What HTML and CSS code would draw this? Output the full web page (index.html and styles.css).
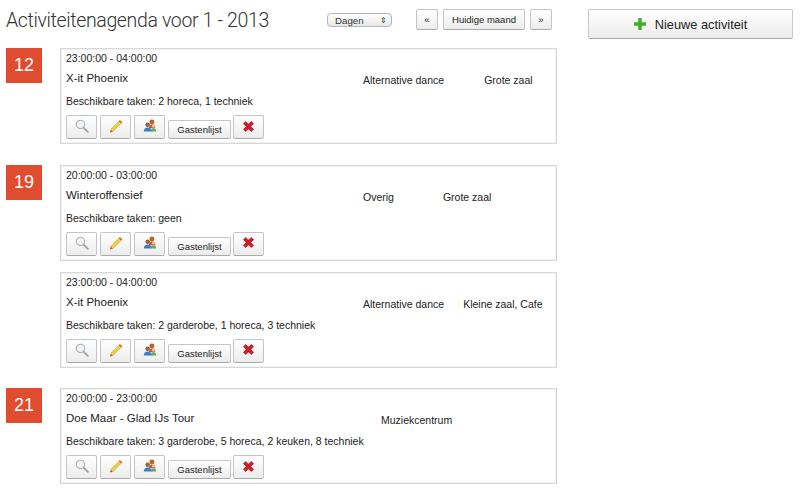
FILE: index.html
```html
<!DOCTYPE html>
<html lang="nl">
<head>
<meta charset="utf-8">
<title>Activiteitenagenda</title>
<link rel="stylesheet" href="styles.css">
</head>
<body>
<svg class="defs" width="0" height="0" aria-hidden="true">
  <symbol id="i-search" viewBox="0 0 18 18">
    <circle cx="7" cy="7" r="5.400" fill="#eef3f8" stroke="#aab4bc" stroke-width="1.400"/>
    <path d="M11 11l5.500 5.500" stroke="#a3a3a3" stroke-width="2.400" stroke-linecap="round"/>
  </symbol>
  <symbol id="i-pencil" viewBox="0 0 18 18">
    <path d="M1.500 17l1-4L14 1.500l3 2.800L5.500 16z" fill="#f0cc45" stroke="#c29a2c" stroke-width=".5"/>
    <path d="M14 1.500l3 2.800-1.400 1.400-2.900-2.800z" fill="#cf6f58"/>
    <path d="M1.500 17l1-3 2.200 2z" fill="#6d6148"/>
  </symbol>
  <symbol id="i-users" viewBox="0 0 18 18">
    <circle cx="11.500" cy="4" r="3.200" fill="#b9642c"/>
    <path d="M7.500 12c0-3.500 1.800-5 4-5s4.500 1.500 4.500 5z" fill="#d2503c"/>
    <circle cx="13.500" cy="9" r="2.200" fill="#e6bd94"/>
    <path d="M10 16c0-2.800 1.500-4.200 3.500-4.200S17 13.200 17 16z" fill="#5fae55"/>
    <circle cx="6" cy="7.500" r="2.900" fill="#9a6236"/>
    <path d="M1 16c0-3.500 2.200-5.200 5-5.200s5 1.700 5 5.200z" fill="#3e7cc8"/>
  </symbol>
  <symbol id="i-x" viewBox="0 0 16 16">
    <path d="M1.500 4.500l3-3L8 5l3.500-3.500 3 3L11 8l3.500 3.500-3 3L8 11l-3.500 3.500-3-3L5 8z" fill="#c8202a" stroke="#a8181f" stroke-width=".4"/>
  </symbol>
</svg>
<div class="page">
  <main class="main">
    <header class="head">
      <h1 class="title">Activiteitenagenda voor 1 - 2013</h1>
      <div class="select"><span>Dagen</span><span class="arrows">&#8661;</span></div>
      <nav class="pager">
        <button class="btn pg small">&laquo;</button>
        <button class="btn pg wide">Huidige maand</button>
        <button class="btn pg small">&raquo;</button>
      </nav>
    </header>

    <section class="day">
      <div class="num">12</div>
      <div class="cards">
        <article class="card">
          <div class="time">23:00:00 - 04:00:00</div>
          <div class="row"><span class="name">X-it Phoenix</span><span class="genre">Alternative dance</span><span class="loc l40">Grote zaal</span></div>
          <div class="tasks">Beschikbare taken: 2 horeca, 1 techniek</div>
          <div class="tools">
            <button class="btn ic"><svg class="icon"><use href="#i-search"/></svg></button>
            <button class="btn ic"><svg class="icon"><use href="#i-pencil"/></svg></button>
            <button class="btn ic"><svg class="icon"><use href="#i-users"/></svg></button>
            <button class="btn guest">Gastenlijst</button>
            <button class="btn ic"><svg class="icon-x"><use href="#i-x"/></svg></button>
          </div>
        </article>
      </div>
    </section>

    <section class="day">
      <div class="num">19</div>
      <div class="cards">
        <article class="card">
          <div class="time">20:00:00 - 03:00:00</div>
          <div class="row"><span class="name">Winteroffensief</span><span class="genre">Overig</span><span class="loc l49">Grote zaal</span></div>
          <div class="tasks">Beschikbare taken: geen</div>
          <div class="tools">
            <button class="btn ic"><svg class="icon"><use href="#i-search"/></svg></button>
            <button class="btn ic"><svg class="icon"><use href="#i-pencil"/></svg></button>
            <button class="btn ic"><svg class="icon"><use href="#i-users"/></svg></button>
            <button class="btn guest">Gastenlijst</button>
            <button class="btn ic"><svg class="icon-x"><use href="#i-x"/></svg></button>
          </div>
        </article>
        <article class="card">
          <div class="time">23:00:00 - 04:00:00</div>
          <div class="row"><span class="name">X-it Phoenix</span><span class="genre">Alternative dance</span><span class="loc l19">Kleine zaal, Cafe</span></div>
          <div class="tasks">Beschikbare taken: 2 garderobe, 1 horeca, 3 techniek</div>
          <div class="tools">
            <button class="btn ic"><svg class="icon"><use href="#i-search"/></svg></button>
            <button class="btn ic"><svg class="icon"><use href="#i-pencil"/></svg></button>
            <button class="btn ic"><svg class="icon"><use href="#i-users"/></svg></button>
            <button class="btn guest">Gastenlijst</button>
            <button class="btn ic"><svg class="icon-x"><use href="#i-x"/></svg></button>
          </div>
        </article>
      </div>
    </section>

    <section class="day">
      <div class="num">21</div>
      <div class="cards">
        <article class="card">
          <div class="time">20:00:00 - 23:00:00</div>
          <div class="row"><span class="name">Doe Maar - Glad IJs Tour</span><span class="loc l18">Muziekcentrum</span></div>
          <div class="tasks">Beschikbare taken: 3 garderobe, 5 horeca, 2 keuken, 8 techniek</div>
          <div class="tools">
            <button class="btn ic"><svg class="icon"><use href="#i-search"/></svg></button>
            <button class="btn ic"><svg class="icon"><use href="#i-pencil"/></svg></button>
            <button class="btn ic"><svg class="icon"><use href="#i-users"/></svg></button>
            <button class="btn guest">Gastenlijst</button>
            <button class="btn ic"><svg class="icon-x"><use href="#i-x"/></svg></button>
          </div>
        </article>
      </div>
    </section>
  </main>
  <aside class="side">
    <button class="btn new"><svg class="plus" viewBox="0 0 12 12"><path d="M4.300 0h3.400v4.300H12v3.400H7.700V12H4.300V7.700H0V4.300h4.300z" fill="#3fae2a"/></svg>Nieuwe activiteit</button>
  </aside>
</div>
</body>
</html>
```
FILE: styles.css
```css
* { box-sizing: border-box; }
html, body { margin: 0; padding: 0; }
body {
  background: #fff;
  color: #222;
  font-family: "Liberation Sans", Arial, sans-serif;
  font-size: 11px;
  overflow: hidden;
  height: 489px;
}
.defs { position: absolute; }
.page { display: flex; padding: 9px 0 0 6px; }
.main { width: 551px; flex: none; }
.side { flex: none; margin-left: 31px; }

.head { display: flex; align-items: flex-start; height: 39px; }
.title { margin: 0; width: 321px; font-family: Roboto, "Liberation Sans", sans-serif; font-size: 19.500px; font-weight: 300; line-height: 24px; letter-spacing: -.35px; color: #333; white-space: nowrap; }
.select {
  margin-top: 4px; width: 65px; height: 14px; padding: 0 4px 0 7px;
  display: flex; justify-content: space-between; align-items: center;
  border: 1px solid #b5b5b5; border-radius: 4px;
  background: linear-gradient(#fff, #e8e8e8);
  font-size: 9.700px; color: #333;
}
.arrows { font-size: 8px; }
.pager { display: flex; gap: 5px; margin-left: 24px; }
.btn {
  font-family: inherit; color: #222; cursor: pointer; padding: 0;
  border: 1px solid #c4c4c4; border-bottom-color: #aaa; border-radius: 2px;
  background: linear-gradient(#fff, #ececec);
  display: flex; align-items: center; justify-content: center;
}
.pg { height: 21px; font-size: 9.500px; }
.small { width: 22px; }
.wide { width: 82px; }

.day { display: flex; align-items: flex-start; margin-bottom: 20.600px; }
.num {
  width: 36px; height: 35px; flex: none; margin-right: 18px;
  background: #e04c2f; color: #fff;
  font-size: 18px; display: flex; align-items: center; justify-content: center;
}
.cards { display: flex; flex-direction: column; gap: 11px; width: 497px; }
.card { height: 96px; border: 1px solid #d8d8d8; outline: 1px solid #f2f2f2; outline-offset: -2px; padding: 3px 4px 0 5px; }
.time { height: 13px; line-height: 13px; font-size: 10.500px; }
.row { display: flex; height: 14px; margin-top: 6px; line-height: 14px; font-size: 10.500px; }
.name { width: 297px; flex: none; font-size: 11.500px; }
.genre { flex: none; margin-top: 2px; }
.loc { margin-top: 2px; }
.l40 { margin-left: 40px; }
.l49 { margin-left: 49px; }
.l19 { margin-left: 19px; }
.l18 { margin-left: 18px; }
.tasks { margin-top: 10px; height: 13px; line-height: 13px; font-size: 10.500px; }
.tools { display: flex; align-items: flex-end; gap: 3px; margin-top: 7px; }
.ic { width: 31px; height: 24px; padding-bottom: 2px; }
.guest { width: 63px; height: 19px; font-size: 9.500px; margin-right: -1px; }
.icon { width: 14px; height: 14px; }
.icon-x { width: 13px; height: 13px; }
.new {
  width: 205px; height: 30px; font-size: 12.800px; gap: 9px;
  border-color: #c8c8c8; border-bottom-color: #aaa;
}
.plus { width: 12px; height: 12px; }
```
